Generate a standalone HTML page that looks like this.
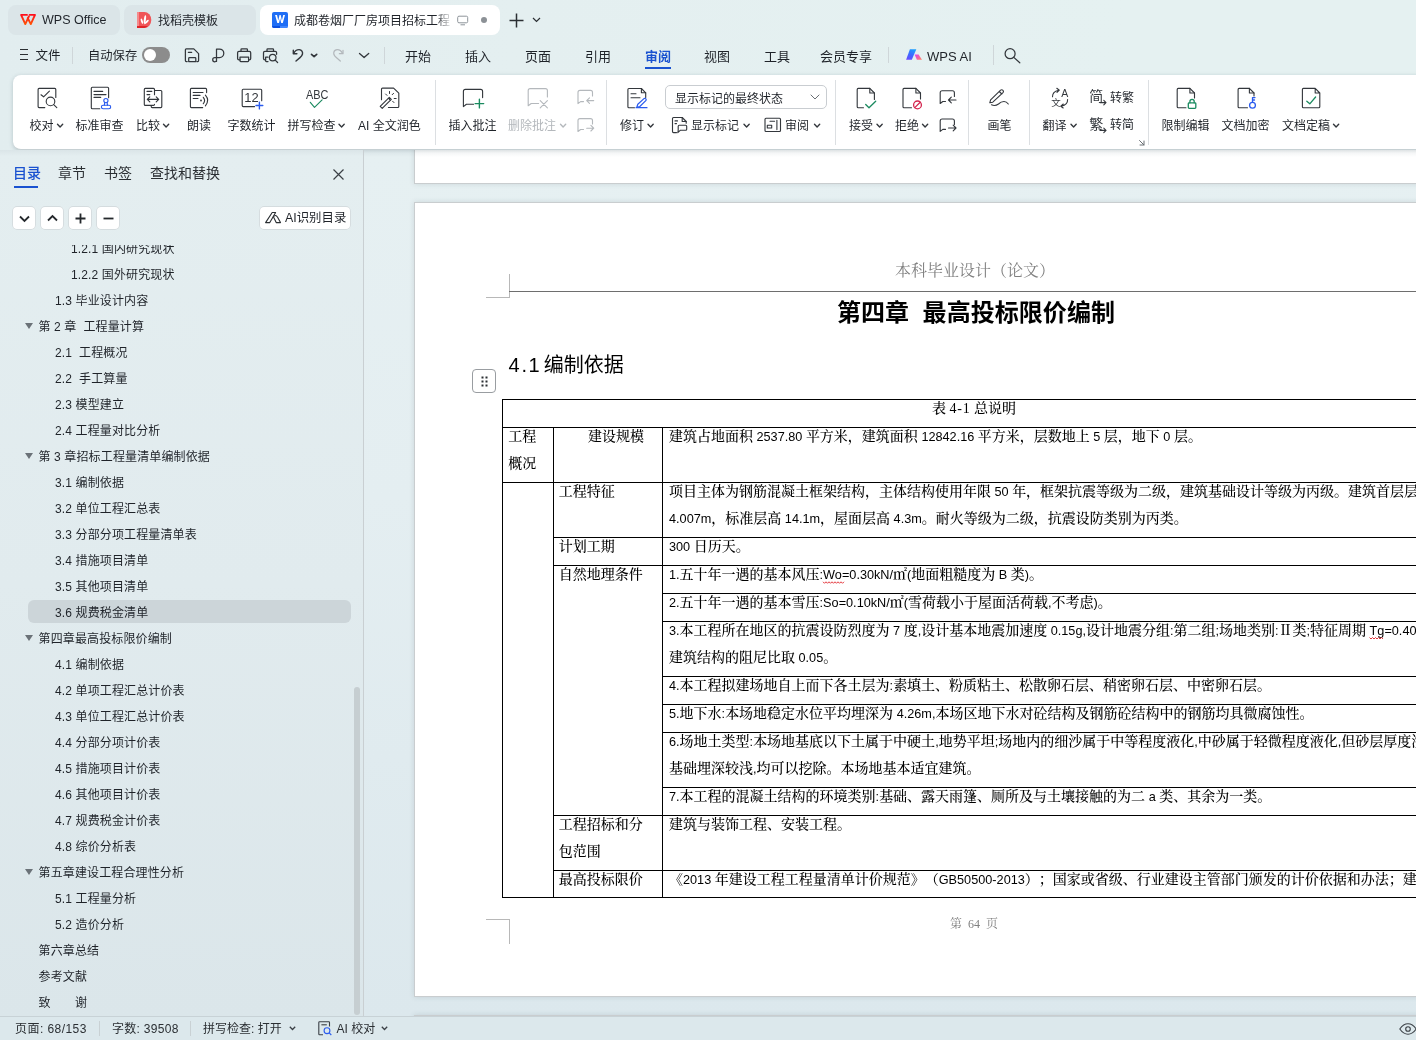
<!DOCTYPE html>
<html lang="zh-CN">
<head>
<meta charset="utf-8">
<title>WPS</title>
<style>
*{box-sizing:border-box;margin:0;padding:0}
html,body{width:1416px;height:1040px;overflow:hidden}
body{position:relative;background:linear-gradient(95deg,#e2edef 0%,#e4eff0 35%,#e5f1f1 75%);font-family:"Liberation Sans","Noto Sans CJK SC",sans-serif;color:#1f2329;font-size:13px}
.abs{position:absolute}
.t{text-spacing-trim:space-all;position:absolute;white-space:nowrap;line-height:1}
svg{position:absolute;overflow:visible}
/* top tabs */
.tab{position:absolute;top:5px;height:30px;border-radius:8px;background:#dbe5e8}
.tab.on{background:#fff}
/* ribbon */
#ribbon{position:absolute;left:13px;top:75px;width:1420px;height:75px;background:#fff;border-radius:8px;border-bottom:1px solid #c6d0d3;box-shadow:0 1px 4px rgba(70,90,100,.28)}
.rl{position:absolute;white-space:nowrap;font-size:12px;line-height:14px;color:#1f2329;top:118.500px}
.vsep{position:absolute;width:1px;background:#dcdfe2}
/* sidebar */
#side{position:absolute;left:0;top:150px;width:364px;height:866px;border-right:1px solid #c9cfd2;background:linear-gradient(180deg,#e4eef0 0%,#e1ebee 50%,#dbe6ea 100%)}
.toc{position:absolute;white-space:pre;font-size:12px;letter-spacing:0.130px;line-height:16px;color:#1f2329}
.tri{position:absolute;width:0;height:0;border-left:4px solid transparent;border-right:4px solid transparent;border-top:6px solid #6b7278}
/* doc */
#doc{position:absolute;left:364px;top:150px;width:1052px;height:866px;background:linear-gradient(180deg,#e6f0f2 0%,#e4eef1 40%,#dce8ed 100%);overflow:hidden}
.page{position:absolute;background:#fff;border:1px solid #c9cdcf;box-shadow:0 0 5px rgba(60,80,90,.16)}
.song{font-family:"Liberation Sans","Noto Serif CJK SC",serif}

.ln{text-spacing-trim:space-all;position:absolute;white-space:nowrap;font-size:14px;line-height:20px;color:#000;font-family:"Liberation Sans","Noto Serif CJK SC",serif;font-weight:500}
.ln .l{font-size:12.700px;font-family:"Liberation Sans",sans-serif;font-weight:400}
.ln .s{font-family:"Liberation Serif",serif;font-size:14px}
.ln .g{margin-left:3.500px}
.ln .h{margin-right:3.500px}
.hl{position:absolute;height:1px;background:#000}
.vl{position:absolute;width:1px;background:#000}
/* status */
#status{position:absolute;left:0;top:1016px;width:1416px;height:24px;background:#dce8ec;border-top:1px solid #c8d2d6}
</style>
</head>
<body>
<div id="root" style="position:absolute;left:0;top:0;width:1416px;height:1040px;will-change:transform;overflow:hidden">
<!-- TABBAR -->
<div class="tab" style="left:8px;width:112px"></div>
<svg style="left:0;top:0" width="60" height="40" viewBox="0 0 60 40" fill="none" stroke="url(#wg)" stroke-width="1.900" stroke-linejoin="round" stroke-linecap="round"><defs><linearGradient id="wg" x1="0" y1="14" x2="0" y2="25" gradientUnits="userSpaceOnUse"><stop offset="0" stop-color="#ff0a1e"/><stop offset="1" stop-color="#ff5a05"/></linearGradient></defs><path d="M27 14.900H21.100L25.300 24.100L28.900 16.400"/><path d="M29.600 14.900H35L30.800 24.100L27.800 18.200"/></svg>
<div class="t" style="left:42px;top:13px;font-size:12.500px;line-height:15px;color:#1f2329">WPS Office</div>
<div class="tab" style="left:124px;width:132px"></div>
<svg style="left:137px;top:12px" width="15" height="16" viewBox="0 0 15 16"><path d="M0 0H7.300A7 8 0 0 1 7.300 16H0Z" fill="#f05558"/><path d="M0 0H2V16H0Z" fill="#f58a8c"/><path d="M0 14H10.800Q9.500 15.500 7.300 16H0Z" fill="#e02428"/><g fill="#fff"><ellipse cx="7.900" cy="7.400" rx="1.050" ry="4.300" transform="rotate(8 7.900 7.400)"/><ellipse cx="4.900" cy="9.200" rx="0.950" ry="2.800" transform="rotate(-18 4.900 9.200)"/><ellipse cx="9.500" cy="10" rx="0.950" ry="3" transform="rotate(48 9.500 10)"/></g></svg>
<div class="t" style="left:158px;top:13px;font-size:12px;line-height:16px">找稻壳模板</div>
<div class="tab on" style="left:260px;width:240px"></div>
<svg style="left:272px;top:12px" width="16" height="16" viewBox="0 0 16 16"><rect width="16" height="16" rx="2" fill="#1f6ef5"/><path d="M0 14H8V16H2A2 2 0 0 1 0 14Z" fill="#0b4fe0"/><path d="M8 14H16A2 2 0 0 1 14 16H8Z" fill="#3f86ff"/><path d="M3.100 2.900H5L6.300 8.600L7.500 2.900H8.700L9.900 8.600L11.200 2.900H13L10.800 11.100H9.200L8.100 6.200L7 11.100H5.300Z" fill="#fff"/></svg>
<div class="t" style="left:294px;top:13px;font-size:12px;line-height:16px;width:163px;overflow:hidden">成都卷烟厂厂房项目招标工程</div>
<div class="abs" style="left:436px;top:8px;width:17px;height:24px;background:linear-gradient(90deg,rgba(255,255,255,0),#fff)"></div>
<svg style="left:457px;top:15px" width="12" height="11" viewBox="0 0 12 11" fill="none" stroke="#8e949a" stroke-width="1"><rect x="0.700" y="1.200" width="10" height="6.600" rx="1.300"/><path d="M3.500 9.800H8"/></svg>
<div class="abs" style="left:480.500px;top:17px;width:6px;height:6px;border-radius:50%;background:#8c9196"></div>
<svg style="left:509px;top:13px" width="15" height="15" viewBox="0 0 15 15" fill="none" stroke="#2b2f33" stroke-width="1.5"><path d="M7.5 0.5V14.5M0.5 7.5H14.5"/></svg>
<svg style="left:532px;top:17px" width="9" height="6" viewBox="0 0 9 6" fill="none" stroke="#2b2f33" stroke-width="1.2"><path d="M1 1L4.5 4.5L8 1"/></svg>
<!-- MENUROW -->
<svg style="left:20px;top:49px" width="8" height="11" viewBox="0 0 8 11" stroke="#2b2f33" stroke-width="1.1"><path d="M0 0.5H8M0 5.5H8M0 10.5H8"/></svg>
<div class="t" style="left:35.500px;top:47.500px;font-size:12.500px;line-height:16px">文件</div>
<div class="vsep" style="left:72px;top:47px;height:17px;background:#cfd6d9"></div>
<div class="t" style="left:88px;top:47.500px;font-size:12.300px;line-height:16px">自动保存</div>
<div class="abs" style="left:142px;top:47px;width:28px;height:16px;border-radius:8px;background:#8c8c8c"></div>
<div class="abs" style="left:144px;top:49px;width:12px;height:12px;border-radius:50%;background:#fff"></div>
<svg style="left:0;top:40px" width="400" height="34" viewBox="0 40 400 34" fill="none" stroke="#33373c" stroke-width="1.250" stroke-linecap="round" stroke-linejoin="round">
<path d="M187.200 61.500H186.300Q185.400 61.500 185.400 60.600V49.800Q185.400 48.900 186.300 48.900H193.800L198.600 53.600V60.600Q198.600 61.500 197.700 61.500H196.800"/><path d="M188.700 61.500V58.400Q188.700 57.700 189.400 57.700H195.100Q195.800 57.700 195.800 58.400V61.500Z"/><path d="M188.400 52.400H191.600"/>
<path d="M216.500 61.400V49H219.500A4.300 4.300 0 0 1 219.500 57.600H214.800A2.100 2.100 0 0 0 214.800 61.800Q216.500 61.800 216.500 60"/>
<path d="M241 51.300V49.600Q241 48.900 241.700 48.900H246.700Q247.400 48.900 247.400 49.600V51.300"/><path d="M240 59.800H239Q237.600 59.800 237.600 58.400V52.700Q237.600 51.300 239 51.300H249.300Q250.700 51.300 250.700 52.700V58.400Q250.700 59.800 249.300 59.800H248.600"/><path d="M240 57.200H248.600V60.800Q248.600 61.500 247.900 61.500H240.700Q240 61.500 240 60.800Z"/>
<path d="M267 51.300V49.600Q267 48.900 267.700 48.900H272.800Q273.500 48.900 273.500 49.600V51.300"/><path d="M265.600 59.800H264.900Q263.500 59.800 263.500 58.400V52.700Q263.500 51.300 264.900 51.300H275.200Q276.600 51.300 276.600 52.700V54.300"/><path d="M268 57.200H265.600V60.800Q265.600 61.500 266.300 61.500H268"/><circle cx="272.700" cy="57.600" r="3.300"/><path d="M275.200 60.100L277.600 62.500"/>
<path d="M293.300 50.300V53.700H296.900" stroke-width="1.400"/><path d="M293.800 53.300Q295.600 49.500 299.200 49.600Q303 50.200 302.500 54Q302 56 300 57.600L296 61" stroke-width="1.400"/>
<path d="M311.500 54.300L314.100 56.700L316.700 54.300" stroke-width="1.700"/>
<g stroke="#b3b8bc"><path d="M343 50.300V53.700H339.400"/><path d="M342.500 53.300Q340.700 49.500 337.100 49.600Q333.300 50.200 333.800 54Q334.300 56 336.300 57.600L340.300 61"/></g>
<path d="M359.500 53.400L364.100 57.600L368.700 53.400" stroke-width="1.300"/>
</svg>
<div class="vsep" style="left:384px;top:47px;height:17px;background:#cfd6d9"></div>
<div class="t" style="left:405px;top:47.500px;font-size:13px;line-height:17px">开始</div>
<div class="t" style="left:465px;top:47.500px;font-size:13px;line-height:17px">插入</div>
<div class="t" style="left:525px;top:47.500px;font-size:13px;line-height:17px">页面</div>
<div class="t" style="left:585px;top:47.500px;font-size:13px;line-height:17px">引用</div>
<div class="t" style="left:645px;top:47.500px;font-size:13px;line-height:17px;color:#1a52d0;font-weight:700">审阅</div>
<div class="abs" style="left:645px;top:67px;width:26px;height:2px;background:#1a52d0"></div>
<div class="t" style="left:704px;top:47.500px;font-size:13px;line-height:17px">视图</div>
<div class="t" style="left:764px;top:47.500px;font-size:13px;line-height:17px">工具</div>
<div class="t" style="left:820px;top:47.500px;font-size:13px;line-height:17px">会员专享</div>
<div class="vsep" style="left:888px;top:47px;height:16px;background:#cfd6d9"></div>
<svg style="left:900px;top:40px" width="130" height="34" viewBox="900 40 130 34"><defs><linearGradient id="aig" x1="913" y1="49" x2="908" y2="60" gradientUnits="userSpaceOnUse"><stop offset="0" stop-color="#1aa0ff"/><stop offset="0.500" stop-color="#3d6bff"/><stop offset="1" stop-color="#6a48ff"/></linearGradient><linearGradient id="aig2" x1="915" y1="54" x2="921" y2="60" gradientUnits="userSpaceOnUse"><stop offset="0" stop-color="#e23bf5"/><stop offset="1" stop-color="#ff8466"/></linearGradient></defs><path d="M909.900 49.200H916.300L911.800 59.800H906.100Z" fill="url(#aig)"/><path d="M914.600 54.500H918.600L922 59.800H916.900Z" fill="url(#aig2)"/><g fill="none" stroke="#33373c" stroke-width="1.250" stroke-linecap="round"><circle cx="1010.100" cy="53.700" r="5"/><path d="M1013.800 57.400L1019.800 62.800"/></g></svg>
<div class="t" style="left:927px;top:47.500px;font-size:13px;line-height:17px">WPS AI</div>
<div class="vsep" style="left:993px;top:45px;height:20px;background:#cfd6d9"></div>

<!-- RIBBON -->
<div id="ribbon"></div>
<div class="vsep" style="left:435px;top:80px;height:65px"></div>
<div class="vsep" style="left:606px;top:80px;height:65px"></div>
<div class="vsep" style="left:835px;top:80px;height:65px"></div>
<div class="vsep" style="left:968px;top:80px;height:65px"></div>
<div class="vsep" style="left:1029px;top:80px;height:65px"></div>
<div class="vsep" style="left:1148px;top:80px;height:65px"></div>
<svg style="left:0;top:75px" width="1416" height="75" viewBox="0 75 1416 75" fill="none" stroke="#33373c" stroke-width="1.120" stroke-linecap="round" stroke-linejoin="round">
<path d="M55.8 97.5V89.4Q55.8 88.4 54.8 88.4H39.1Q38.1 88.4 38.1 89.4V106.6Q38.1 107.6 39.1 107.6H44.8"/><path d="M41 94.8L43.6 96.8L49.4 91.2"/><circle cx="50.5" cy="101.4" r="4.3"/><path d="M53.7 104.6L56.8 107.6"/>
<path d="M108.6 97.7V88.3Q108.6 87.3 107.6 87.3H92.3Q91.3 87.3 91.3 88.3V107.7Q91.3 108.7 92.3 108.7H99.8"/><path d="M94 91.4H102.7M94 94.6H106M94 97.4H100.7"/>
<g stroke="#2a5bee"><circle cx="105.9" cy="100.6" r="2.1"/><path d="M104.7 102.4L104.3 105.3M107.1 102.4L107.500 105.300" /><rect x="101.4" y="105.3" width="9.300" height="3.400" rx="1.700"/></g>
<path d="M154.5 94.7V89.4Q154.5 88.4 153.5 88.4H145.3Q144.3 88.4 144.3 89.4V104.4Q144.3 105.4 145.3 105.4H153.5Q154.5 105.4 154.5 104.2"/><path d="M154.5 90.5H160.800Q161.800 90.500 161.800 91.500V106.600Q161.800 107.600 160.800 107.600H152.200Q151.200 107.600 151.200 106.600V105.600"/><path d="M147 91.400H151.800M147 94.600H149.800"/><path d="M147.300 99.400H158.700M149.800 96.900L147.300 99.400L149.800 101.900M156.200 96.900L158.700 99.400L156.200 101.900"/>
<path d="M206.600 92.600V89.400Q206.600 88.400 205.600 88.400H191.400Q190.400 88.400 190.400 89.400V106.600Q190.400 107.600 191.400 107.600H202.700"/><path d="M193.200 92.500H203M193.200 95.400H200M193.200 98.500H198"/><circle cx="201" cy="100.500" r="0.900" fill="#33373c" stroke="none"/><path d="M203.300 97.300Q205.900 100.500 203.300 103.700M205.400 95.200Q210 100.500 205.400 105.800"/>
<path d="M261.700 100.700V90.300Q261.700 89.300 260.700 89.300H243.200Q242.200 89.300 242.200 90.300V105.600Q242.200 106.600 243.200 106.600H254.600"/><path d="M259.400 102.100V108.900M256 105.500H262.800" stroke="#2a5bee" stroke-width="1.400"/>
<path d="M310.300 102.300L314.500 107.400L322.100 99.800" stroke="#1a8a5f"/>
<path d="M381.500 99.800V89.100Q381.500 88.100 382.500 88.100H393.600L398.800 93.100V106.500Q398.800 107.500 397.800 107.500H388.400"/><path d="M389.300 97.400L391.300 99.300L382.200 108.300L380.200 106.400Z" stroke-width="1.100"/><path d="M388.300 98.400L390.300 100.300" stroke-width="1"/><path d="M389.500 91.500V93.500M385.600 94L387 95.400M393.600 93.300L392.200 94.700M394.200 98.500H396.200M392.600 101.200L394 102.600" stroke-width="1"/>
<path d="M482.600 97.600V91.400Q482.600 89.400 480.600 89.400H465.400Q463.400 89.400 463.400 91.400V106.600L466.400 104.300H473.600"/><path d="M479.400 99.300V107.900M475.100 103.600H483.700" stroke="#1a8a5f" stroke-width="1.400"/>
<g stroke="#b4b8bc"><path d="M547.400 97V90.600Q547.400 88.600 545.400 88.600H530.200Q528.200 88.600 528.200 90.600V105.800L531.200 103.500H538.600"/><path d="M540.200 100.600L547.400 107.800M547.400 100.600L540.200 107.800"/>
<path d="M592.500 96V92.400Q592.500 90.400 590.500 90.400H580Q578 90.400 578 92.400V103.600L580.600 101.600H583.500"/><path d="M593.700 100.600H586.700M589.500 97.800L586.700 100.600L589.500 103.400"/>
<path d="M592.500 124V120.600Q592.500 118.600 590.500 118.600H580Q578 118.600 578 120.600V131.500L580.600 129.500H583.500"/><path d="M586.700 128.200H593.700M590.900 125.400L593.700 128.200L590.900 131"/></g>
<path d="M645.700 97.500V92.800L641.400 88.500H628.900Q627.900 88.500 627.900 89.500V106.700Q627.900 107.700 628.900 107.700H634.500"/><path d="M641.400 88.500V92.800H645.700"/><path d="M631 93.700H636M631 97.800H640"/>
<g stroke="#2a5bee" stroke-width="1.200"><path d="M636.800 107.300L637.800 104.300L644 98.600Q645 97.900 645.900 98.800Q646.700 99.800 645.800 100.700L639.800 106.500Z"/><path d="M636 107.700H647"/></g>
<path d="M676.500 132.600H673.500Q672.500 132.600 672.500 131.600V118.500Q672.500 117.500 673.500 117.500H682.200L686.200 121.500V123.300"/><path d="M682.200 117.500V121.500H686.200"/><path d="M675 120.900H677.500M675 123.600H676.500"/><path d="M679.200 125.200H685.700Q686.700 125.200 686.700 126.200V129.200Q686.700 130.200 685.700 130.200H680.500L677.800 132.600Q678.300 131 678.200 129.500V126.200Q678.200 125.200 679.200 125.200Z"/>
<rect x="765" y="118.300" width="15.500" height="13.200" rx="1"/><path d="M770 121.300H774.600M776.900 120.300V129.600M767.300 125.200H771.700V128H767.300Z" stroke-width="1.100"/>
<path d="M874.4 99.5V93.0L869.8 88.4H858.2Q857.2 88.4 857.2 89.4V106.7Q857.2 107.7 858.2 107.7H863.5"/><path d="M869.8 88.4V93.0H874.4"/>
<path d="M865.700 104.500L869 107.800L875.700 101.200" stroke="#1a8a5f" stroke-width="1.300"/>
<path d="M920.5 99V93.0L915.9 88.4H904Q903 88.4 903 89.4V106.7Q903 107.7 904 107.7H911.5"/><path d="M915.9 88.4V93.0H920.5"/>
<g stroke="#d4264f" stroke-width="1.300"><circle cx="917.500" cy="104.900" r="3.900"/><path d="M914.800 107.600L920.200 102.200"/></g>
<path d="M954.400 96.500V92.800Q954.400 90.800 952.400 90.800H942.200Q940.200 90.800 940.200 92.800V103.500L942.800 101.500H945.500"/><path d="M956 100H948.500M951.300 97.200L948.500 100L951.300 102.800"/>
<path d="M954.400 124.500V121Q954.400 119 952.400 119H942.200Q940.200 119 940.200 121V131.400L942.800 129.400H945.500"/><path d="M948.500 128H956M953.200 125.200L956 128L953.200 130.800"/>
<path d="M989.800 102.800L990.600 99.800L1000.600 90.200Q1001.800 89.200 1003 90.300Q1004 91.500 1003 92.700L992.800 102.200Z M999.300 91.500L1001.800 94" stroke-width="1.100"/><path d="M991.500 104.800Q995 106.500 998.500 104Q1001 101.500 1004 101.500Q1006.500 101.500 1008.300 104" stroke-width="1.100"/>
<path d="M1052.500 96.800Q1052.200 91.600 1058.800 90.200M1056.800 88.300L1059.300 90.200L1057 92.400" stroke-width="1.100"/><path d="M1067.600 99.500Q1067.900 104.800 1061.200 106.200M1063.300 104L1060.800 106.200L1063.200 108" stroke-width="1.100"/>
<path d="M1100 102.600H1106M1103.800 100.400L1106 102.600L1103.800 104.800" stroke-width="1.100"/><path d="M1100 130.400H1106M1103.800 128.200L1106 130.400L1103.800 132.600" stroke-width="1.100"/>
<path d="M1139.500 140.500L1144 145M1144 141V145H1140" stroke="#6b7075" stroke-width="1"/>
<path d="M1194.5 98V93.0L1189.9 88.4H1178.2Q1177.2 88.4 1177.2 89.4V106.7Q1177.2 107.7 1178.2 107.7H1186"/><path d="M1189.9 88.4V93.0H1194.5"/>
<g stroke="#1a8a5f" stroke-width="1.300"><rect x="1188.300" y="102.800" width="7.500" height="5.600" rx="0.800"/><path d="M1189.900 102.800V101.500A2.150 2.150 0 0 1 1194.200 101.500V102.800"/></g>
<path d="M1254 96V93.0L1249.4 88.4H1239.1Q1238.1 88.4 1238.1 89.4V106.7Q1238.1 107.7 1239.1 107.7H1247.5"/><path d="M1249.4 88.4V93.0H1254"/>
<g stroke="#2a5bee" stroke-width="1.300"><circle cx="1252.500" cy="105.300" r="2.900"/><path d="M1252.500 102.400V97.600H1255M1252.500 100H1254.500"/></g>
<path d="M1315.2 88.4H1303.4Q1302.4 88.4 1302.4 89.4V106.7Q1302.4 107.7 1303.4 107.7H1318.8Q1319.8 107.7 1319.8 106.7V93.0L1315.2 88.4V93.0H1319.8"/>
<path d="M1306.800 101.200L1309.800 103.800L1315.600 97" stroke="#1a8a5f" stroke-width="1.300"/>
<path d="M57.5 124.3L60.1 126.900L62.7 124.300" stroke="#33373c" stroke-width="1.4"/>
<path d="M163.5 124.3L166.1 126.900L168.7 124.300" stroke="#33373c" stroke-width="1.4"/>
<path d="M339 124.3L341.6 126.900L344.2 124.300" stroke="#33373c" stroke-width="1.4"/>
<path d="M648 124.3L650.6 126.900L653.2 124.300" stroke="#33373c" stroke-width="1.4"/>
<path d="M744 124.3L746.6 126.900L749.2 124.300" stroke="#33373c" stroke-width="1.4"/>
<path d="M814.5 124.3L817.1 126.900L819.7 124.300" stroke="#33373c" stroke-width="1.4"/>
<path d="M877 124.3L879.6 126.900L882.2 124.300" stroke="#33373c" stroke-width="1.4"/>
<path d="M922.5 124.3L925.1 126.900L927.7 124.300" stroke="#33373c" stroke-width="1.4"/>
<path d="M1071 124.3L1073.6 126.900L1076.2 124.300" stroke="#33373c" stroke-width="1.4"/>
<path d="M1333.5 124.3L1336.1 126.900L1338.7 124.300" stroke="#33373c" stroke-width="1.4"/>
<path d="M560.5 124.3L563.1 126.900L565.7 124.300" stroke="#b4b8bc" stroke-width="1.4"/>
<path d="M811 95L815 99L819 95" stroke="#6a6f74" stroke-width="1"/>
<text x="244.200" y="101.800" font-family="Liberation Sans,sans-serif" font-size="13" fill="#33373c" stroke="none" textLength="14.400" lengthAdjust="spacingAndGlyphs">12</text>
<text x="306" y="98.600" font-family="Liberation Sans,sans-serif" font-size="13" fill="#33373c" stroke="none" textLength="22.400" lengthAdjust="spacingAndGlyphs">ABC</text>
<text x="1061.200" y="96.800" font-family="Liberation Sans,sans-serif" font-size="10.500" fill="#33373c" stroke="none">A</text>
<text x="1051.300" y="105.600" font-family="Liberation Sans,Noto Sans CJK SC,sans-serif" font-size="9.500" fill="#33373c" stroke="none">文</text>
<text x="1089.300" y="101.300" font-family="Liberation Sans,Noto Sans CJK SC,sans-serif" font-size="14" fill="#33373c" stroke="none">简</text>
<text x="1089.300" y="129" font-family="Liberation Sans,Noto Sans CJK SC,sans-serif" font-size="14" fill="#33373c" stroke="none">繁</text>
</svg>
<div class="rl" style="left:29.5px">校对</div>
<div class="rl" style="left:75.5px">标准审查</div>
<div class="rl" style="left:136px">比较</div>
<div class="rl" style="left:187px">朗读</div>
<div class="rl" style="left:227.5px">字数统计</div>
<div class="rl" style="left:287.5px">拼写检查</div>
<div class="rl" style="left:358px">AI 全文润色</div>
<div class="rl" style="left:448.5px">插入批注</div>
<div class="rl" style="left:620px">修订</div>
<div class="rl" style="left:691px">显示标记</div>
<div class="rl" style="left:785px">审阅</div>
<div class="rl" style="left:849px">接受</div>
<div class="rl" style="left:895px">拒绝</div>
<div class="rl" style="left:987.5px">画笔</div>
<div class="rl" style="left:1042.5px">翻译</div>
<div class="rl" style="left:1161.5px">限制编辑</div>
<div class="rl" style="left:1221.5px">文档加密</div>
<div class="rl" style="left:1282px">文档定稿</div>
<div class="rl" style="left:508px;color:#b4b8bc">删除批注</div>
<div class="rl" style="left:1110px;top:90.700px">转繁</div>
<div class="rl" style="left:1110px;top:118.300px">转简</div>
<div class="abs" style="left:665px;top:85px;width:162px;height:24px;border:1px solid #c9cdd1;border-radius:5px"></div>
<div class="rl" style="left:675px;top:92.200px">显示标记的最终状态</div>
<!-- SIDEBAR -->
<div id="side">
<div class="abs" style="left:0;top:0;width:363px;height:6px;background:linear-gradient(180deg,rgba(90,110,120,.07),rgba(90,110,120,0))"></div>
<div class="t" style="left:13px;top:14px;font-size:14px;line-height:18px;color:#1a52d0;font-weight:500">目录</div>
<div class="abs" style="left:14px;top:35.500px;width:24px;height:2.500px;background:#1a52d0"></div>
<div class="t" style="left:58px;top:14px;font-size:14px;line-height:18px;color:#2b2f33">章节</div>
<div class="t" style="left:104px;top:14px;font-size:14px;line-height:18px;color:#2b2f33">书签</div>
<div class="t" style="left:150px;top:14px;font-size:14px;line-height:18px;color:#2b2f33">查找和替换</div>
<svg style="left:333px;top:19px" width="11" height="11" viewBox="0 0 11 11" stroke="#3a3f45" stroke-width="1.200" fill="none"><path d="M0.500 0.500L10.500 10.500M10.500 0.500L0.500 10.500"/></svg>
<div class="abs" style="left:13px;top:57px;width:22px;height:22px;background:#fff;box-shadow:0 0 0 0.700px #d0d6d9;border-radius:4px"></div><svg style="left:12.5px;top:56.500px" width="23" height="23" viewBox="0 0 23 23" fill="none" stroke="#24282c" stroke-width="1.800"><path d="M7 9.500L11.500 14L16 9.500"/></svg>
<div class="abs" style="left:41px;top:57px;width:22px;height:22px;background:#fff;box-shadow:0 0 0 0.700px #d0d6d9;border-radius:4px"></div><svg style="left:40.5px;top:56.500px" width="23" height="23" viewBox="0 0 23 23" fill="none" stroke="#24282c" stroke-width="1.800"><path d="M7 13.500L11.500 9L16 13.500"/></svg>
<div class="abs" style="left:69px;top:57px;width:22px;height:22px;background:#fff;box-shadow:0 0 0 0.700px #d0d6d9;border-radius:4px"></div><svg style="left:68.5px;top:56.500px" width="23" height="23" viewBox="0 0 23 23" fill="none" stroke="#24282c" stroke-width="1.800"><path d="M11.500 6.500V16.500M6.500 11.500H16.500"/></svg>
<div class="abs" style="left:97px;top:57px;width:22px;height:22px;background:#fff;box-shadow:0 0 0 0.700px #d0d6d9;border-radius:4px"></div><svg style="left:96.5px;top:56.500px" width="23" height="23" viewBox="0 0 23 23" fill="none" stroke="#24282c" stroke-width="1.800"><path d="M6.500 11.500H16.500"/></svg>
<div class="abs" style="left:260px;top:57px;width:90px;height:22px;background:#fff;box-shadow:0 0 0 0.700px #d0d6d9;border-radius:4px"></div>
<svg style="left:265px;top:61px" width="15" height="13" viewBox="0 0 15 13" fill="none" stroke="#2b2f33" stroke-width="1.100" stroke-linejoin="round"><path d="M7.200 1.500H10.600L4.800 11.600H0.600Z"/><path d="M8.400 5.800Q10.500 3 12.600 6.200L15.500 11.600H11.200Z"/></svg>
<div class="t" style="left:285px;top:60px;font-size:12.400px;line-height:17px;color:#1f2329">AI识别目录</div>
<div class="abs" style="left:0;top:95px;width:352px;height:771px;overflow:hidden">
<div class="abs" style="left:28px;top:355px;width:323px;height:23px;border-radius:6px;background:#ccd5d9"></div>
<div class="toc" style="left:71px;top:-3.7px">1.2.1 国内研究现状</div>
<div class="toc" style="left:71px;top:22.3px">1.2.2 国外研究现状</div>
<div class="toc" style="left:55px;top:48.3px">1.3 毕业设计内容</div>
<div class="tri" style="left:25px;top:77.5px"></div><div class="toc" style="left:38.5px;top:74.3px">第 2 章  工程量计算</div>
<div class="toc" style="left:55px;top:100.3px">2.1  工程概况</div>
<div class="toc" style="left:55px;top:126.3px">2.2  手工算量</div>
<div class="toc" style="left:55px;top:152.3px">2.3 模型建立</div>
<div class="toc" style="left:55px;top:178.3px">2.4 工程量对比分析</div>
<div class="tri" style="left:25px;top:207.5px"></div><div class="toc" style="left:38.5px;top:204.3px">第 3 章招标工程量清单编制依据</div>
<div class="toc" style="left:55px;top:230.3px">3.1 编制依据</div>
<div class="toc" style="left:55px;top:256.3px">3.2 单位工程汇总表</div>
<div class="toc" style="left:55px;top:282.3px">3.3 分部分项工程量清单表</div>
<div class="toc" style="left:55px;top:308.3px">3.4 措施项目清单</div>
<div class="toc" style="left:55px;top:334.3px">3.5 其他项目清单</div>
<div class="toc" style="left:55px;top:360.3px">3.6 规费税金清单</div>
<div class="tri" style="left:25px;top:389.5px"></div><div class="toc" style="left:38.5px;top:386.3px">第四章最高投标限价编制</div>
<div class="toc" style="left:55px;top:412.3px">4.1 编制依据</div>
<div class="toc" style="left:55px;top:438.3px">4.2 单项工程汇总计价表</div>
<div class="toc" style="left:55px;top:464.3px">4.3 单位工程汇总计价表</div>
<div class="toc" style="left:55px;top:490.3px">4.4 分部分项计价表</div>
<div class="toc" style="left:55px;top:516.3px">4.5 措施项目计价表</div>
<div class="toc" style="left:55px;top:542.3px">4.6 其他项目计价表</div>
<div class="toc" style="left:55px;top:568.3px">4.7 规费税金计价表</div>
<div class="toc" style="left:55px;top:594.3px">4.8 综价分析表</div>
<div class="tri" style="left:25px;top:623.5px"></div><div class="toc" style="left:38.5px;top:620.3px">第五章建设工程合理性分析</div>
<div class="toc" style="left:55px;top:646.3px">5.1 工程量分析</div>
<div class="toc" style="left:55px;top:672.3px">5.2 造价分析</div>
<div class="toc" style="left:38.5px;top:698.3px">第六章总结</div>
<div class="toc" style="left:38.5px;top:724.3px">参考文献</div>
<div class="toc" style="left:38.5px;top:750.3px">致　　谢</div>
</div>
<div class="abs" style="left:354px;top:537px;width:6px;height:328px;border-radius:3px;background:#c6ced1"></div>
</div>
<!-- DOC -->
<div id="doc">
<div class="page" style="left:50px;top:-10px;width:1100px;height:44px"></div>
<div class="page" style="left:50px;top:52px;width:1100px;height:795px"></div>
<div class="page" style="left:50px;top:865px;width:1100px;height:40px"></div>
<div class="abs" style="left:122px;top:147px;width:24px;height:1px;background:#b8b8b8"></div><div class="abs" style="left:145px;top:124px;width:1px;height:24px;background:#b8b8b8"></div>
<div class="abs" style="left:122px;top:769px;width:24px;height:1px;background:#b8b8b8"></div><div class="abs" style="left:145px;top:769px;width:1px;height:25px;background:#b8b8b8"></div>
<div class="t" style="left:531px;top:111px;font-size:16px;line-height:20px;color:#808080;font-family:'Liberation Serif','Noto Serif CJK SC',serif">本科毕业设计（论文）</div>
<div class="abs" style="left:145px;top:141px;width:1000px;height:1px;background:#6e6e6e"></div>
<div class="t" style="left:473px;top:148px;font-size:24px;line-height:30px;font-weight:700;color:#000;letter-spacing:0.050px;white-space:pre">第四章  最高投标限价编制</div>
<div class="t" style="left:144.5px;top:203px;font-size:20px;line-height:24px;color:#000">4</div><div class="t" style="left:157.5px;top:203px;font-size:20px;line-height:24px;color:#000">.</div><div class="t" style="left:164.5px;top:203px;font-size:20px;line-height:24px;color:#000">1</div><div class="t" style="left:179.70000000000005px;top:202.5px;font-size:20px;line-height:24px;color:#000">编制依据</div>
<div class="abs" style="left:108px;top:219px;width:24px;height:24px;border:1px solid #999da1;border-radius:4px;background:#fff"></div>
<svg style="left:108.5px;top:219.5px" width="23" height="23" viewBox="0 0 23 23" fill="#2b2f33"><rect x="8.500" y="6.500" width="2" height="2"/><rect x="12.500" y="6.500" width="2" height="2"/><rect x="8.500" y="10.500" width="2" height="2"/><rect x="12.500" y="10.500" width="2" height="2"/><rect x="8.500" y="14.500" width="2" height="2"/><rect x="12.500" y="14.500" width="2" height="2"/></svg>
<div class="hl" style="left:138px;top:249px;width:1000px"></div><div class="hl" style="left:138px;top:277px;width:1000px"></div><div class="hl" style="left:138px;top:332px;width:1000px"></div><div class="hl" style="left:189px;top:387px;width:1000px"></div><div class="hl" style="left:189px;top:415px;width:1000px"></div><div class="hl" style="left:298px;top:443px;width:1000px"></div><div class="hl" style="left:298px;top:471px;width:1000px"></div><div class="hl" style="left:298px;top:526px;width:1000px"></div><div class="hl" style="left:298px;top:554px;width:1000px"></div><div class="hl" style="left:298px;top:582px;width:1000px"></div><div class="hl" style="left:298px;top:637px;width:1000px"></div><div class="hl" style="left:189px;top:665px;width:1000px"></div><div class="hl" style="left:189px;top:720px;width:1000px"></div><div class="hl" style="left:138px;top:747px;width:1000px"></div>
<div class="vl" style="left:138px;top:249px;height:499px"></div><div class="vl" style="left:189px;top:277px;height:471px"></div><div class="vl" style="left:298px;top:277px;height:471px"></div>
<div class="ln" style="left:568px;top:248px">表<span class="s g h" style="letter-spacing:0.800px">4-1</span>总说明</div>
<div class="ln" style="left:144.3px;top:276.0px">工程</div>
<div class="ln" style="left:144.3px;top:303.0px">概况</div>
<div class="ln" style="left:224px;top:276.0px">建设规模</div>
<div class="ln" style="left:305px;top:276.0px">建筑占地面积<span class="l g h">2537.80</span>平方米，建筑面积<span class="l g h">12842.16</span>平方米，层数地上<span class="l g h">5</span>层，地下<span class="l g h">0</span>层。</div>
<div class="ln" style="left:194.70000000000005px;top:331.0px">工程特征</div>
<div class="ln" style="left:305px;top:331.0px">项目主体为钢筋混凝土框架结构，主体结构使用年限<span class="l g h">50</span>年，框架抗震等级为二级，建筑基础设计等级为丙级。建筑首层层高</div>
<div class="ln" style="left:305px;top:358.0px"><span class="l">4.007m</span>，标准层高<span class="l g">14.1m</span>，屋面层高<span class="l g">4.3m</span>。耐火等级为二级，抗震设防类别为丙类。</div>
<div class="ln" style="left:194.70000000000005px;top:386.0px">计划工期</div>
<div class="ln" style="left:305px;top:386.0px"><span class="l h">300</span>日历天。</div>
<div class="ln" style="left:194.70000000000005px;top:414.0px">自然地理条件</div>
<div class="ln" style="left:305px;top:414.0px"><span class="l">1.</span>五十年一遇的基本风压<span class="l">:Wo=0.30kN/</span>㎡<span class="l">(</span>地面粗糙度为<span class="l g h">B</span>类<span class="l">)</span>。</div>
<div class="ln" style="left:305px;top:442.0px"><span class="l">2.</span>五十年一遇的基本雪压<span class="l">:So=0.10kN/</span>㎡<span class="l">(</span>雪荷载小于屋面活荷载<span class="l">,</span>不考虑<span class="l">)</span>。</div>
<div class="ln" style="left:305px;top:470.0px"><span class="l">3.</span>本工程所在地区的抗震设防烈度为<span class="l g h">7</span>度<span class="l">,</span>设计基本地震加速度<span class="l g">0.15g,</span>设计地震分组<span class="l">:</span>第二组<span class="l">;</span>场地类别<span class="l">:</span>Ⅱ类<span class="l">;</span>特征周期<span class="l g">Tg=0.40s;</span></div>
<div class="ln" style="left:305px;top:497.0px">建筑结构的阻尼比取<span class="l g">0.05</span>。</div>
<div class="ln" style="left:305px;top:525.0px"><span class="l">4.</span>本工程拟建场地自上而下各土层为<span class="l">:</span>素填土、粉质粘土、松散卵石层、稍密卵石层、中密卵石层。</div>
<div class="ln" style="left:305px;top:553.0px"><span class="l">5.</span>地下水<span class="l">:</span>本场地稳定水位平均埋深为<span class="l g">4.26m,</span>本场区地下水对砼结构及钢筋砼结构中的钢筋均具微腐蚀性。</div>
<div class="ln" style="left:305px;top:581.0px"><span class="l">6.</span>场地土类型<span class="l">:</span>本场地基底以下土属于中硬土<span class="l">,</span>地势平坦<span class="l">;</span>场地内的细沙属于中等程度液化<span class="l">,</span>中砂属于轻微程度液化<span class="l">,</span>但砂层厚度浅<span class="l">,</span></div>
<div class="ln" style="left:305px;top:608.0px">基础埋深较浅<span class="l">,</span>均可以挖除。本场地基本适宜建筑。</div>
<div class="ln" style="left:305px;top:636.0px"><span class="l">7.</span>本工程的混凝土结构的环境类别<span class="l">:</span>基础、露天雨篷、厕所及与土壤接触的为二<span class="l g h">a</span>类、其余为一类。</div>
<div class="ln" style="left:194.70000000000005px;top:664.0px">工程招标和分</div>
<div class="ln" style="left:194.70000000000005px;top:691.0px">包范围</div>
<div class="ln" style="left:305px;top:664.0px">建筑与装饰工程、安装工程。</div>
<div class="ln" style="left:194.70000000000005px;top:719.0px">最高投标限价</div>
<div class="ln" style="left:305px;top:719.0px">《<span class="l h">2013</span>年建设工程工程量清单计价规范》（<span class="l">GB50500-2013</span>）；国家或省级、行业建设主管部门颁发的计价依据和办法；建设工程</div>
<svg style="left:0;top:0" width="1052" height="866" viewBox="364 150 1052 866" fill="none" stroke="#e0242a" stroke-width="0.900"><path d="M823 581.8L824.5 583.3L826.0 581.8L827.5 583.3L829.0 581.8L830.5 583.3L832.0 581.8L833.5 583.3L835.0 581.8L836.5 583.3L838.0 581.8L839.5 583.3L841.0 581.8L842.5 583.3L844.0 581.8"/></svg>
<svg style="left:0;top:0" width="1052" height="866" viewBox="364 150 1052 866" fill="none" stroke="#e0242a" stroke-width="0.900"><path d="M1369.5 637.5L1371.0 639.0L1372.5 637.5L1374.0 639.0L1375.5 637.5L1377.0 639.0L1378.5 637.5L1380.0 639.0L1381.5 637.5L1383.0 639.0"/></svg>
<div class="t" style="left:586px;top:766px;font-size:12px;line-height:16px;color:#808080;font-family:'Liberation Serif','Noto Serif CJK SC',serif;white-space:pre;word-spacing:3px">第 64 页</div>
<div class="abs" style="left:0;top:0;width:1052px;height:7px;background:linear-gradient(180deg,rgba(90,110,120,.20),rgba(90,110,120,.06) 45%,rgba(90,110,120,0))"></div>
</div>
<!-- STATUS -->
<div id="status">
<div class="abs" style="left:0;top:0;width:1416px;height:24px">
<div class="t" style="left:15px;top:3.500px;font-size:12px;line-height:16px;color:#2b2f33;letter-spacing:0.450px">页面: 68/153</div>
<div class="vsep" style="left:99px;top:4px;height:15px;background:#c9d1d4"></div>
<div class="t" style="left:112px;top:3.500px;font-size:12px;line-height:16px;color:#2b2f33;letter-spacing:0.300px">字数: 39508</div>
<div class="vsep" style="left:190px;top:4px;height:15px;background:#c9d1d4"></div>
<div class="t" style="left:203px;top:3.500px;font-size:12px;line-height:16px;color:#2b2f33">拼写检查: 打开</div>
<svg style="left:289px;top:9px" width="7" height="5" viewBox="0 0 7 5" fill="none" stroke="#3a3f45" stroke-width="1.300"><path d="M0.800 0.800L3.500 3.500L6.200 0.800"/></svg>
<svg style="left:318px;top:3px" width="14" height="16" viewBox="0 0 14 16" fill="none" stroke="#3a3f45" stroke-width="1.100" stroke-linejoin="round"><path d="M5 14.800H1.500Q0.800 14.800 0.800 14.100V2.500Q0.800 1.800 1.500 1.800H10.800Q11.500 1.800 11.500 2.500V6.500"/><path d="M3.400 4.800H8.800"/><circle cx="9" cy="10.700" r="2.900" stroke="#2a5bee"/><path d="M11.200 12.900L13.300 15" stroke="#2a5bee"/></svg>
<div class="t" style="left:336.500px;top:3.500px;font-size:12px;line-height:16px;color:#2b2f33">AI 校对</div>
<svg style="left:381px;top:9px" width="7" height="5" viewBox="0 0 7 5" fill="none" stroke="#3a3f45" stroke-width="1.300"><path d="M0.800 0.800L3.500 3.500L6.200 0.800"/></svg>
<svg style="left:1399px;top:6px" width="18" height="12" viewBox="0 0 18 12" fill="none" stroke="#3a3f45" stroke-width="1.100"><path d="M0.800 6Q4.500 0.800 9 0.800Q13.500 0.800 17.200 6Q13.500 11.200 9 11.200Q4.500 11.200 0.800 6Z"/><circle cx="9" cy="6" r="2.300"/></svg>
</div>
</div>
</div>
</body>
</html>
